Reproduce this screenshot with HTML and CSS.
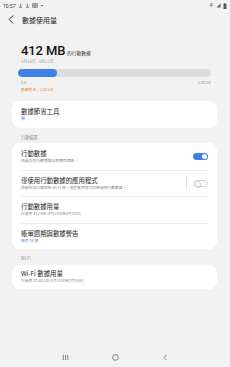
FILE: index.html
```html
<!DOCTYPE html>
<html lang="zh-Hant">
<head>
<meta charset="utf-8">
<link rel="stylesheet" href="styles.css">
</head>
<body>
<div class="screen">
  <div class="status">
    <div class="status-left">
      <span class="time">10:57</span>
      <svg class="sicon" viewBox="0 0 6 6" width="5" height="5"><path d="M3 0.5v4M1.5 3l1.5 1.5 1.5-1.5M1 5.5h4" stroke="#666" stroke-width="0.8" fill="none"/></svg>
      <svg class="sicon" viewBox="0 0 6 6" width="5" height="5"><path d="M3 0.5v4M1.5 3l1.5 1.5 1.5-1.5M1 5.5h4" stroke="#666" stroke-width="0.8" fill="none"/></svg>
      <svg class="sicon" viewBox="0 0 7 6" width="6" height="5"><rect x="0.5" y="0.5" width="6" height="5" rx="0.5" fill="none" stroke="#666" stroke-width="0.8"/><rect x="1.5" y="1.5" width="4" height="3" fill="#888"/></svg>
      <span class="dot"></span>
    </div>
    <div class="status-right">
      <svg viewBox="0 0 6 6" width="5" height="5"><path d="M1 1h4M1 3h4M2.5 1v4" stroke="#777" stroke-width="0.8"/></svg>
      <svg viewBox="0 0 6 6" width="5" height="5"><path d="M0.5 5.5L5.5 0.5V5.5Z" fill="#666"/></svg>
      <svg viewBox="0 0 4 7" width="4" height="6"><rect x="1.3" y="0" width="1.4" height="1" fill="#555"/><rect x="0.3" y="1" width="3.4" height="6" fill="#555"/></svg>
    </div>
  </div>

  <div class="appbar">
    <svg class="back" viewBox="0 0 8 12" width="6" height="9"><path d="M6.5 1L1.5 6l5 5" stroke="#333" stroke-width="1.3" fill="none" stroke-linecap="round" stroke-linejoin="round"/></svg>
    <span class="title">數據使用量</span>
  </div>

  <div class="summary">
    <div class="amount"><span class="big">412 MB</span><span class="unit">的行動數據</span></div>
    <div class="period">3月14日 - 4月13日</div>
    <div class="bar"><div class="fill" style="width:20%"></div></div>
    <div class="scale"><span>0 B</span><span>2.00 GB</span></div>
    <div class="warn">數據警告：2.00 GB</div>
  </div>

  <div class="card first">
    <div class="row">
      <div class="texts">
        <div class="rt">數據節省工具</div>
        <div class="rs blue">關</div>
      </div>
    </div>
  </div>

  <div class="section">行動裝置</div>
  <div class="card">
    <div class="row">
      <div class="texts">
        <div class="rt">行動數據</div>
        <div class="rs">透過您的行動網路存取網際網路。</div>
      </div>
      <span class="toggle on"></span>
    </div>
    <div class="row">
      <div class="texts">
        <div class="rt">僅使用行動數據的應用程式</div>
        <div class="rs">即使在您已連線至 Wi-Fi 時，這些應用程式仍將使用行動數據。</div>
      </div>
      <span class="vsep"></span>
      <span class="toggle off"></span>
    </div>
    <div class="row">
      <div class="texts">
        <div class="rt">行動數據用量</div>
        <div class="rs">已使用 412 MB (3月14日至4月13日)</div>
      </div>
    </div>
    <div class="row">
      <div class="texts">
        <div class="rt">帳單週期與數據警告</div>
        <div class="rs blue">每月 14 號</div>
      </div>
    </div>
  </div>

  <div class="section">Wi-Fi</div>
  <div class="card last">
    <div class="row">
      <div class="texts">
        <div class="rt">Wi-Fi 數據用量</div>
        <div class="rs">已使用 13.60 GB (2月18日至3月28日)</div>
      </div>
    </div>
  </div>

  <div class="spacer"></div>

  <div class="navbar">
    <svg viewBox="0 0 8 8" width="7" height="7"><path d="M1.5 1v6M4 1v6M6.5 1v6" stroke="#555" stroke-width="0.8"/></svg>
    <svg viewBox="0 0 8 8" width="7" height="7"><rect x="1" y="1" width="6" height="6" rx="2.2" fill="none" stroke="#555" stroke-width="0.8"/></svg>
    <svg viewBox="0 0 8 8" width="7" height="7"><path d="M5 1L2.5 4 5 7" stroke="#555" stroke-width="0.8" fill="none"/></svg>
  </div>
</div>
</body>
</html>
```

FILE: styles.css
```css
* { box-sizing: border-box; margin: 0; padding: 0; }
html, body { width: 230px; height: 367px; overflow: hidden; }
body {
  background: #f2f2f2;
  font-family: "Noto Sans CJK TC", "Noto Sans", sans-serif;
  color: #1c1c1c;
}
.screen { display: flex; flex-direction: column; height: 367px; }

.status {
  height: 11px;
  flex: none;
  display: flex;
  justify-content: space-between;
  align-items: center;
  padding: 0 3px 0 3px;
}
.status-left, .status-right { display: flex; align-items: center; gap: 2px; }
.time { font-family: "Roboto", sans-serif; font-size: 5px; color: #333; margin-right: 1px; }
.dot { width: 1.5px; height: 1.5px; border-radius: 50%; background: #666; margin-left: 1px; }

.appbar {
  height: 17px;
  flex: none;
  display: flex;
  align-items: center;
  padding-left: 8px;
}
.back { margin-right: 8px; }
.title { font-size: 7px; color: #222; }

.summary { padding: 16px 19px 0 18px; flex: none; }
.amount { display: flex; align-items: baseline; padding-left: 3px; height: 13px; }
.big { font-family: "Roboto", sans-serif; font-weight: 500; font-size: 13px; line-height: 13px; color: #111; letter-spacing: -0.1px; }
.unit { font-size: 4.8px; margin-left: 1.5px; color: #333; }
.period { font-size: 4px; color: #999; margin-top: 2px; padding-left: 3px; line-height: 5px; }
.bar { margin-top: 4.5px; height: 8px; border-radius: 4px; background: #dcdcdc; overflow: hidden; }
.fill { height: 100%; background: #3f80e6; border-radius: 4px; }
.scale { display: flex; justify-content: space-between; font-size: 3.8px; color: #999; margin-top: 3px; line-height: 5px; padding-left: 3px; }
.warn { font-size: 3.8px; color: #e68a33; margin-top: 2.5px; line-height: 5px; padding-left: 3px; }

.card {
  flex: none;
  margin: 3.5px 13px 0 12px;
  background: #fff;
  border-radius: 8px;
  padding: 0 9px;
}
.card.first { margin-top: 8.5px; }
.row {
  display: flex;
  align-items: center;
  height: 26.5px;
  border-top: 0.5px solid #ededed;
}
.card.first .row { height: 27px; }
.card.last .row { height: 24.5px; }
.row:first-child { border-top: none; }
.texts { flex: 1; min-width: 0; }
.rt { font-size: 6.4px; line-height: 8px; color: #1e1e1e; white-space: nowrap; }
.rs { font-size: 3.8px; line-height: 5px; color: #8a8a8a; white-space: nowrap; overflow: hidden; }
.blue { color: #3f7fe0; }

.section { flex: none; font-size: 4.2px; color: #888; padding: 7px 0 0 21px; line-height: 5px; }

.toggle { position: relative; width: 15px; height: 7px; border-radius: 4px; flex: none; }
.toggle.on { background: #3f80e6; }
.toggle.on::after { content: ""; position: absolute; right: 1px; top: 1px; width: 5px; height: 5px; border-radius: 50%; background: #fff; }
.toggle.off { border: 0.7px solid #cfcfcf; background: #fff; }
.toggle.off::after { content: ""; position: absolute; left: 0.5px; top: 0.5px; width: 4.5px; height: 4.5px; border-radius: 50%; border: 0.7px solid #cfcfcf; }
.vsep { width: 0.6px; height: 14px; background: #e3e3e3; margin: 0 6px 0 4px; flex: none; }

.spacer { flex: 1; }
.navbar {
  flex: none;
  height: 20px;
  display: flex;
  justify-content: center;
  align-items: center;
  gap: 43px;
}
```
